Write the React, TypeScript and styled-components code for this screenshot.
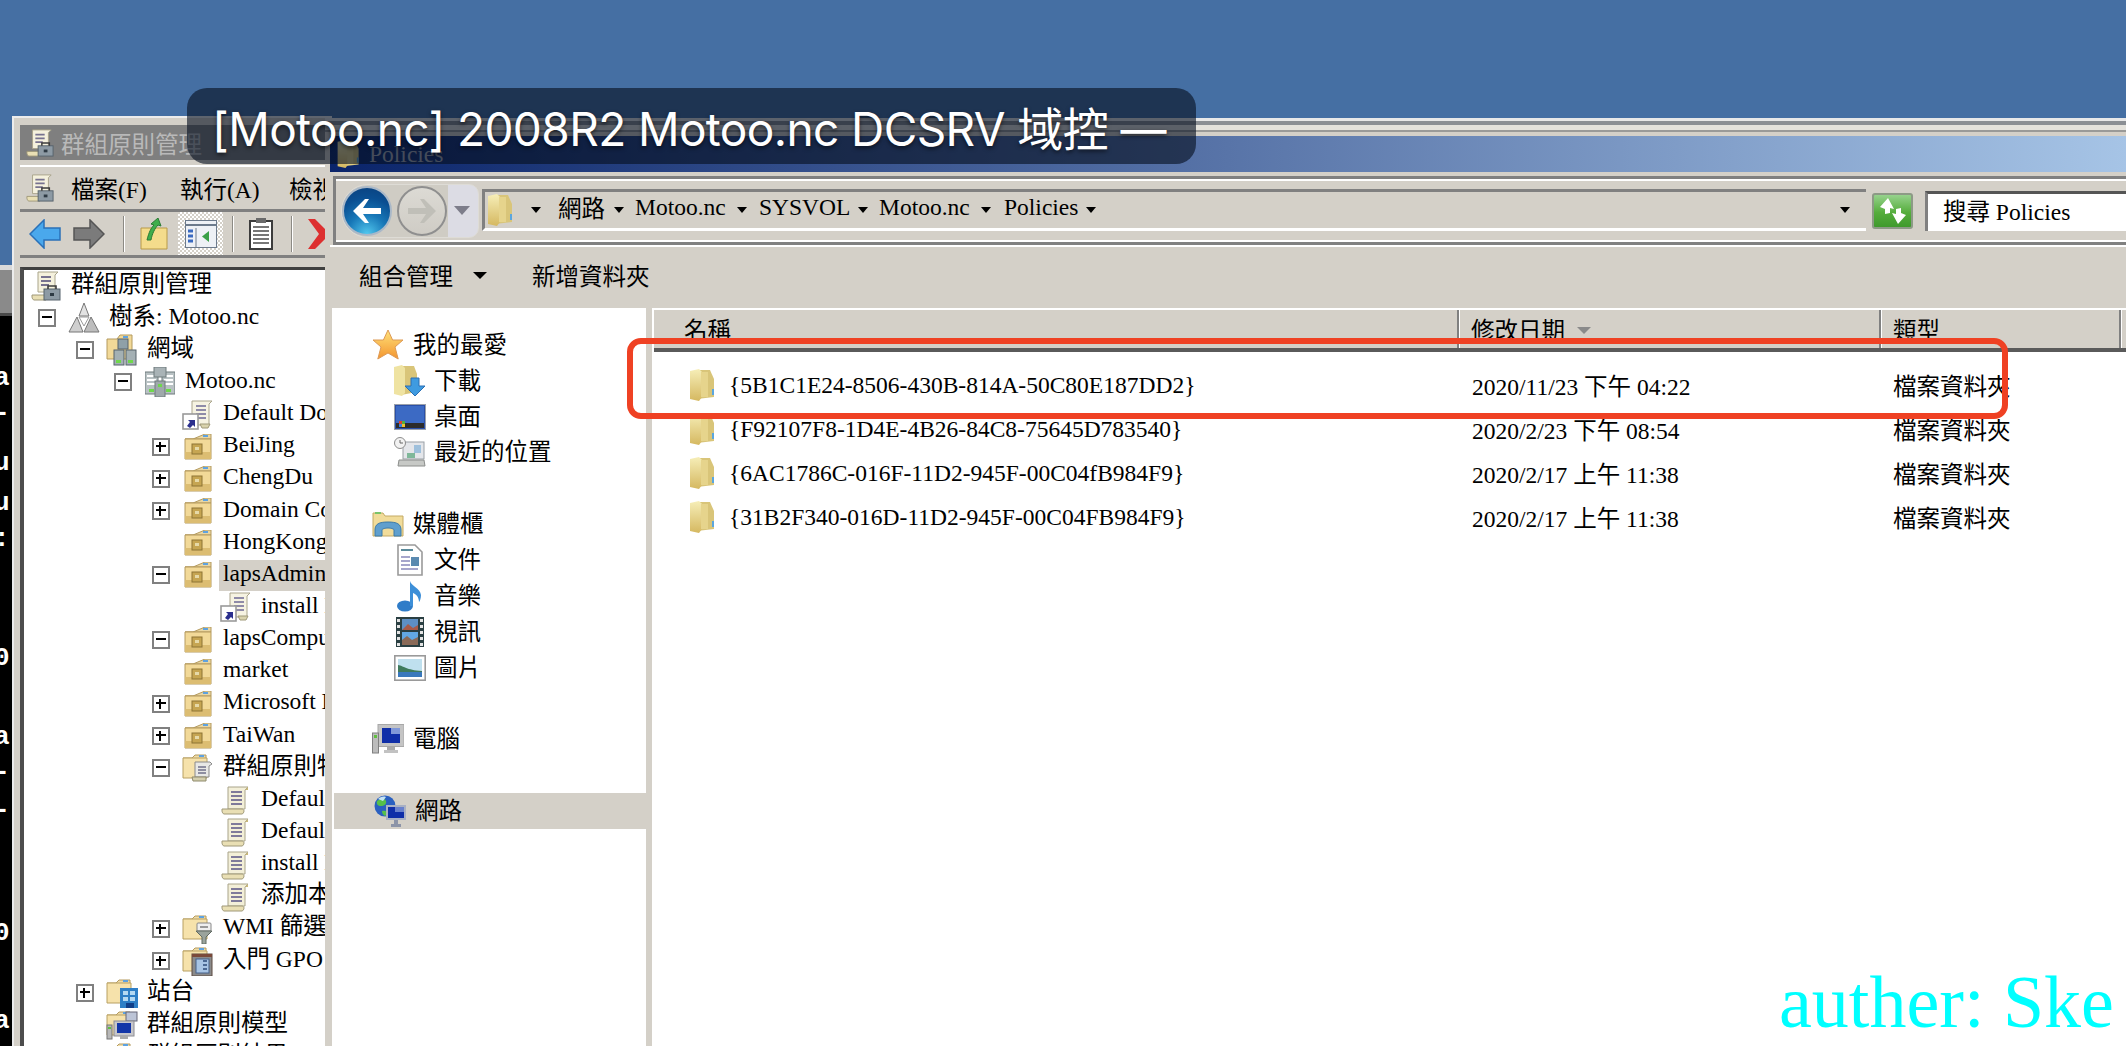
import * as React from "react";
import styled, { createGlobalStyle } from "styled-components";

const UI_FONT = `"Liberation Serif", "Noto Sans CJK TC", serif`;
const FACE = "#d4d0c8";

const GlobalStyle = createGlobalStyle`
  html, body { margin: 0; padding: 0; background: #456fa3; }
  * { box-sizing: border-box; }
`;

const Desktop = styled.div`
  position: relative;
  width: 2126px;
  height: 1046px;
  overflow: hidden;
  background: #456fa3;
  font-family: ${UI_FONT};
  font-size: 23.5px;
  color: #000;
`;

/* ---------- console window showing behind, only a sliver is visible ---------- */
const Terminal = styled.div`
  position: absolute;
  left: 0;
  top: 265px;
  width: 13px;
  bottom: 0;
  overflow: hidden;
  background: #000;
  border-top: 5px solid #d9d9d9;
  &::before {
    content: "";
    display: block;
    height: 43px;
    background: #8a8a8a;
    border-bottom: 3px solid #4a4a4a;
  }
`;

const TermGlyph = styled.span<{ $top: number }>`
  position: absolute;
  left: -6px;
  top: ${(p) => p.$top}px;
  font-family: "Liberation Mono", monospace;
  font-weight: 700;
  font-size: 26px;
  line-height: 26px;
  color: #fff;
`;

/* ---------- group policy console (left window) ---------- */
const MmcWindow = styled.div`
  position: absolute;
  left: 12px;
  top: 116px;
  width: 320px;
  bottom: 0;
  background: ${FACE};
  border-top: 2px solid #ececec;
  border-left: 2px solid #ececec;
  padding: 7px 0 0 6px;
  display: flex;
  flex-direction: column;
`;

const MmcTitle = styled.div`
  height: 35px;
  flex: none;
  display: flex;
  align-items: center;
  gap: 6px;
  padding-left: 5px;
  background: #7f7f7f;
  color: #b9b9b9;
  white-space: nowrap;
  overflow: hidden;
`;

const MmcMenu = styled.div`
  height: 47px;
  margin-top: 5px;
  flex: none;
  display: flex;
  align-items: center;
  padding-left: 5px;
  border-top: 2px solid #fff;
  border-bottom: 3px solid #808080;
  white-space: nowrap;
  overflow: hidden;
`;

const MenuLabel = styled.span`
  margin-left: 16px;
  width: 93px;
  flex: none;
  & + & { margin-left: 16px; }
`;

const MmcToolbar = styled.div`
  height: 46px;
  flex: none;
  display: flex;
  align-items: center;
  padding-left: 9px;
  border-bottom: 3px solid #808080;
  overflow: hidden;
`;

const ToolGap = styled.span`
  width: 12px;
  flex: none;
`;

const ToolSep = styled.span`
  width: 2px;
  height: 36px;
  margin: 0 15px 0 18px;
  background: #8c8a84;
  border-right: 1px solid #fff;
  flex: none;
`;

const ToolToggle = styled.span`
  width: 45px;
  height: 44px;
  margin: 0 -9px 0 10px;
  flex: none;
  display: flex;
  align-items: center;
  justify-content: center;
  background: repeating-conic-gradient(#fff 0 25%, ${FACE} 0 50%) 0 0 / 4px 4px;
`;

const TreePane = styled.div`
  margin-top: 9px;
  flex: 1;
  margin-right: 6px;
  background: #fff;
  border-top: 3px solid #404040;
  border-left: 4px solid #4d4d4d;
  padding-top: 0;
  overflow: hidden;
`;

const TreeRow = styled.div<{ $level: number }>`
  height: 32.15px;
  display: flex;
  align-items: center;
  margin-left: ${(p) => p.$level * 38 - 24}px;
  white-space: nowrap;
`;

const Expander = styled.span<{ $kind?: "+" | "-" }>`
  width: 18px;
  height: 18px;
  flex: none;
  position: relative;
  margin-right: 12px;
  visibility: ${(p) => (p.$kind ? "visible" : "hidden")};
  border: 2px solid #808080;
  &::before {
    content: "";
    position: absolute;
    left: 2px;
    right: 2px;
    top: 5px;
    height: 2px;
    background: #000;
  }
  &::after {
    content: "";
    display: ${(p) => (p.$kind === "+" ? "block" : "none")};
    position: absolute;
    top: 2px;
    bottom: 2px;
    left: 5px;
    width: 2px;
    background: #000;
  }
`;

const TreeIcon = styled.span`
  width: 32px;
  height: 30px;
  flex: none;
  display: flex;
  align-items: center;
  justify-content: center;
`;

const TreeLabel = styled.span<{ $selected?: boolean }>`
  margin-left: ${(p) => (p.$selected ? "5px" : "9px")};
  padding: ${(p) => (p.$selected ? "0 60px 4px 4px" : "0 0 4px")};
  height: 31px;
  line-height: 27px;
  background: ${(p) => (p.$selected ? FACE : "transparent")};
`;

/* ---------- explorer window (right) ---------- */
const ExplorerWindow = styled.div`
  position: absolute;
  left: 325px;
  top: 118px;
  right: 0;
  bottom: 0;
  display: flex;
  flex-direction: column;
  background: ${FACE};
  border-left: 5px solid ${FACE};
`;

const FrameTop = styled.div`
  height: 18px;
  flex: none;
  margin-left: -5px;
  background: linear-gradient(
    to bottom,
    #e8e8e8 0 3px,
    #8b8f94 3px 7px,
    #e4e2dc 7px 12px,
    #9a9a98 12px 14px,
    ${FACE} 14px 18px
  );
`;

const ExplorerTitle = styled.div`
  height: 36px;
  flex: none;
  display: flex;
  align-items: center;
  gap: 8px;
  padding-left: 7px;
  color: #a8acb8;
  background: linear-gradient(to right, #0a246a, #a6c4e6);
`;

const NavBar = styled.div`
  height: 69px;
  flex: none;
  margin-top: 4px;
  margin-left: 3px;
  display: flex;
  align-items: center;
  padding: 0 0 0 5px;
  border: 3px solid #808080;
  border-right: 0;
  box-shadow: 0 -2px 0 #fff inset, 0 2px 0 #fff inset;
`;

const NavCluster = styled.div`
  display: flex;
  align-items: center;
  width: 138px;
  height: 54px;
  flex: none;
  border-radius: 27px 10px 10px 27px;
  background: linear-gradient(to right, #cfccc4 0 78%, #dcdce4 78%);
  border: 1px solid #dedcd6;
`;

const RoundButton = styled.span<{ $active?: boolean }>`
  width: 50px;
  height: 50px;
  flex: none;
  border-radius: 50%;
  display: flex;
  align-items: center;
  justify-content: center;
  margin-right: 5px;
  border: 2px solid ${(p) => (p.$active ? "#a9b8c8" : "#8f8f8f")};
  background: ${(p) =>
    p.$active
      ? "radial-gradient(circle at 50% 100%, #52c8ee 0, #1878b8 38%, #0a4f92 70%, #0a3f7c 100%)"
      : "linear-gradient(to bottom, #dcdad4, #cfccc5)"};
`;

const AddressBox = styled.div`
  flex: 1;
  min-width: 0;
  height: 42px;
  margin-left: 3px;
  margin-top: -2px;
  display: flex;
  align-items: center;
  padding-left: 3px;
  white-space: nowrap;
  border-top: 3px solid #808080;
  border-left: 3px solid #808080;
  border-bottom: 3px solid #fff;
`;

const Crumb = styled.span<{ $w: number; $pl: number }>`
  width: ${(p) => p.$w}px;
  padding: 0 0 5px ${(p) => p.$pl}px;
  flex: none;
`;

const CrumbArrow = styled.span<{ $ml?: number }>`
  width: 0;
  height: 0;
  flex: none;
  margin-left: ${(p) => p.$ml ?? 0}px;
  border-left: 5px solid transparent;
  border-right: 5px solid transparent;
  border-top: 6px solid #000;
`;

const RefreshButton = styled.span`
  width: 41px;
  height: 36px;
  flex: none;
  margin-left: 6px;
  display: flex;
  align-items: center;
  justify-content: center;
  border: 2px solid #8d9a86;
  border-radius: 3px;
  background: linear-gradient(to bottom, #96d28c, #55ad3c 55%, #3f9a2c);
`;

const SearchBox = styled.div`
  width: 201px;
  height: 40px;
  flex: none;
  margin-left: 12px;
  padding: 0 0 5px 15px;
  background: #fff;
  display: flex;
  align-items: center;
  border-top: 3px solid #555;
  border-left: 3px solid #808080;
  white-space: nowrap;
`;

const CommandBar = styled.div`
  height: 63px;
  flex: none;
  display: flex;
  align-items: center;
  padding: 0 0 6px 29px;
  border-top: 2px solid #fff;
`;

const CommandArrow = styled.span`
  width: 0;
  height: 0;
  margin: 2px 45px 0 20px;
  border-left: 7px solid transparent;
  border-right: 7px solid transparent;
  border-top: 7px solid #000;
`;

const Panes = styled.div`
  flex: 1;
  display: flex;
  min-height: 0;
  gap: 6px;
  padding-left: 2px;
`;

const NavPane = styled.div`
  width: 314px;
  flex: none;
  background: #fff;
  padding-top: 19px;
`;

const NavRow = styled.div<{ $level: number; $selected?: boolean }>`
  height: 35.85px;
  display: flex;
  align-items: center;
  padding-left: ${(p) => (p.$level ? 62 : 40)}px;
  background: ${(p) => (p.$selected ? FACE : "transparent")};
  margin-left: ${(p) => (p.$selected ? "2px" : "0")};
`;

const NavLabel = styled.span<{ $level: number }>`
  margin-left: ${(p) => (p.$level ? 8 : 9)}px;
  padding-bottom: 4px;
`;

const NavIcon = styled.span`
  width: 32px;
  height: 34px;
  flex: none;
  display: flex;
  align-items: center;
  justify-content: center;
`;

const ListPane = styled.div`
  flex: 1;
  background: #fff;
  min-width: 0;
`;

const ListHeader = styled.div`
  height: 44px;
  display: flex;
  margin-left: 2px;
  background: ${FACE};
  border-top: 2px solid #fff;
  border-bottom: 4px solid #5a5a5a;
`;

const HeaderCell = styled.div<{ $w: number }>`
  width: ${(p) => p.$w}px;
  flex: none;
  display: flex;
  align-items: center;
  padding-left: ${(p) => (p.$w > 700 ? 30 : 12)}px;
  border-right: 2px solid #808080;
  box-shadow: 1px 0 0 #fff;
  white-space: nowrap;
`;

const SortArrow = styled.span`
  width: 0;
  height: 0;
  margin: 2px 0 0 12px;
  border-left: 7px solid transparent;
  border-right: 7px solid transparent;
  border-top: 7px solid #8a8a8a;
`;

const FileList = styled.div`
  padding-top: 11px;
`;

const FileRow = styled.div`
  height: 44px;
  display: grid;
  grid-template-columns: 820px 421px auto;
  align-items: center;
  white-space: nowrap;
`;

const NameCell = styled.div`
  display: flex;
  align-items: center;
  gap: 13px;
  padding-left: 38px;
`;

/* ---------- things lying over the windows ---------- */
const Hud = styled.div`
  position: absolute;
  left: 187px;
  top: 88px;
  width: 1009px;
  height: 76px;
  border-radius: 20px;
  background: rgba(6, 16, 32, 0.62);
  color: #fff;
  padding-left: 25px;
  display: flex;
  align-items: center;
  font-family: Inter, "Noto Sans CJK TC", sans-serif;
  font-size: 46px;
  letter-spacing: -0.6px;
  white-space: nowrap;
  text-shadow: 0 2px 4px rgba(0, 0, 0, 0.6);
`;

const Callout = styled.div`
  position: absolute;
  left: 627px;
  top: 338px;
  width: 1381px;
  height: 81px;
  border: 6px solid #ef4123;
  border-radius: 14px;
`;

const Watermark = styled.div`
  position: absolute;
  left: 1779px;
  top: 960px;
  font-family: "Liberation Serif", serif;
  font-size: 74px;
  line-height: 85px;
  color: #00ffff;
  white-space: nowrap;
`;

/* ---------- icons ---------- */
const Svg = styled.svg`
  display: block;
  flex: none;
`;

type IconProps = { w?: number; h?: number };

const Scroll = ({ w = 30, h = 30 }: IconProps) => (
  <Svg width={w} height={h} viewBox="0 0 30 30">
    <path d="M7 2h20l-3 3v19H7z" fill="#f3efd8" stroke="#a9a48a" />
    <path d="M24 5l3-3v3z" fill="#c9b87a" />
    <path d="M10 7h11M10 11h11M10 15h11M10 19h11" stroke="#7f7a9a" strokeWidth="2" />
    <path d="M1 24h20c1 0 2 1 2 2s-1 3-2 3H3c-1 0-2-2-2-3z" fill="#e9dfb4" stroke="#9f9878" />
  </Svg>
);

const ScrollTool = ({ w = 30, h = 30 }: IconProps) => (
  <Svg width={w} height={h} viewBox="0 0 30 30">
    <path d="M7 1h20l-3 3v17H7z" fill="#f5f1dd" stroke="#a9a48a" />
    <path d="M10 6h10M10 10h10M10 14h8" stroke="#77728f" strokeWidth="2" />
    <path d="M1 24h14v5H3c-1 0-2-2-2-3z" fill="#e9dfb4" stroke="#9f9878" />
    <rect x="13" y="18" width="16" height="11" fill="#8d9aa4" stroke="#56626c" />
    <path d="M17 18v-3h8v3" fill="none" stroke="#3c3c3c" strokeWidth="1.6" />
    <rect x="19" y="22" width="4" height="3" fill="#2e3a44" />
  </Svg>
);

const ShortcutScroll = () => (
  <Svg width={32} height={30} viewBox="0 0 32 30">
    <path d="M10 1h20l-3 3v21H10z" fill="#f6f3e2" stroke="#aaa58c" />
    <path d="M14 6h10M14 10h10M14 14h10M14 18h10" stroke="#8f8ba8" strokeWidth="2" />
    <path d="M18 24h10l-2 4H20z" fill="#d9d3ad" stroke="#a09a7a" />
    <rect x="1" y="14" width="15" height="15" fill="#fff" stroke="#9a9a9a" strokeWidth="1.6" />
    <rect x="4" y="17" width="9" height="9" fill="#fff" />
    <path d="M5 26l3-4-2-2h7v7l-2-2-3 3z" fill="#2b2f8e" />
  </Svg>
);

const OuFolder = () => (
  <Svg width={28} height={26} viewBox="0 0 28 26">
    <path d="M1 5h8l12-5h6v5z" fill="#e9d6a2" stroke="#b49a5e" />
    <rect x="19" y="1" width="5" height="2" fill="#5ea2e0" />
    <path d="M1 5h26v20H1z" fill="#f2d998" stroke="#b49a5e" />
    <path d="M1 18h26v7H1z" fill="#dcbd72" />
    <rect x="8" y="10" width="10" height="10" fill="#c6a552" stroke="#8d7434" />
    <rect x="11" y="13" width="4" height="3" fill="#e6d9a8" />
  </Svg>
);

const ContainerFolder = ({ badge }: { badge: "gpo" | "wmi" | "starter" | "site" | "model" | "result" }) => (
  <Svg width={32} height={30} viewBox="0 0 32 30">
    <path d="M1 5h9l3-3h11v3" fill="#efdca8" stroke="#b49a5e" />
    <rect x="17" y="2" width="5" height="2" fill="#5ea2e0" />
    <path d="M1 5h24v20H1z" fill="#f6e2ab" stroke="#b8a062" />
    {badge === "gpo" && (
      <g>
        <path d="M13 9h15l2 2-3 2v11H13z" fill="#e8e8e6" stroke="#8a8a8a" />
        <path d="M16 14h8M16 17h8M16 20h8" stroke="#70708a" strokeWidth="1.6" />
        <path d="M10 24h14v4H11z" fill="#d4cfae" stroke="#8f8a6c" />
      </g>
    )}
    {badge === "wmi" && (
      <g>
        <rect x="15" y="9" width="14" height="8" rx="1" fill="#efefef" stroke="#888" />
        <rect x="18" y="12" width="8" height="2" fill="#999" />
        <path d="M14 17h16l-6 6v7h-4v-7z" fill="#9aa39c" stroke="#606a62" />
      </g>
    )}
    {badge === "starter" && (
      <g>
        <rect x="10" y="8" width="20" height="22" fill="#8a8a8a" stroke="#5d4a40" />
        <rect x="10" y="8" width="20" height="3" fill="#7a4a3a" />
        <rect x="14" y="13" width="13" height="14" fill="#a8c4e4" stroke="#44608a" />
        <path d="M21 15h4M21 19h4M21 23h4" stroke="#2c4a78" strokeWidth="1.6" />
      </g>
    )}
    {badge === "site" && (
      <g>
        <rect x="14" y="10" width="18" height="20" fill="#2f7fc6" />
        <path d="M17 13h5v4h-5zM24 13h5v4h-5zM17 19h5v4h-5zM24 19h5v4h-5z" fill="#b5d9f2" />
        <rect x="20" y="25" width="8" height="5" fill="#123f88" />
      </g>
    )}
    {badge === "model" && (
      <g>
        <rect x="20" y="2" width="11" height="9" fill="#bcc4d6" stroke="#667" />
        <rect x="8" y="11" width="20" height="15" fill="#c7c7cb" stroke="#8c8c92" />
        <rect x="11" y="13" width="14" height="10" fill="#1336a8" />
        <rect x="14" y="26" width="8" height="3" fill="#aaa" />
        <rect x="1" y="15" width="5" height="14" fill="#b8b8b8" stroke="#777" />
        <rect x="2" y="17" width="3" height="2" fill="#60c040" />
      </g>
    )}
    {badge === "result" && (
      <g>
        <rect x="12" y="9" width="18" height="18" fill="#e6e6e6" stroke="#888" />
      </g>
    )}
  </Svg>
);

const DomainTree = () => (
  <Svg width={32} height={32} viewBox="0 0 32 32">
    <path d="M16 1l5 13H11z" fill="#e2e2e2" stroke="#777" />
    <path d="M9 15l6 15H1z" fill="#cfcfcf" stroke="#777" />
    <path d="M23 15l8 15H16z" fill="#bdbdbd" stroke="#777" />
    <path d="M11 15h10l-5 9z" fill="#fff" stroke="#999" />
  </Svg>
);

const Rack = ({ x }: { x: number }) => (
  <g>
    <rect x={x} y="5" width="13" height="22" fill="#b9c2c4" stroke="#6f7a7c" />
    <path d={`M${x + 2} 9h9M${x + 2} 13h9M${x + 2} 17h9`} stroke="#fff" strokeWidth="2" />
    <rect x={x + 4} y="22" width="5" height="3" fill="#6fd84c" />
  </g>
);

const Servers = () => (
  <Svg width={30} height={30} viewBox="0 0 30 30">
    <Rack x={0} />
    <Rack x={17} />
    <rect x="9" y="0" width="12" height="10" fill="#a9b3b6" stroke="#6f7a7c" />
    <rect x="10" y="14" width="10" height="16" fill="#9fa9ab" stroke="#6f7a7c" />
    <rect x="13" y="17" width="4" height="3" fill="#6fd84c" />
  </Svg>
);

const DomainFolder = () => (
  <Svg width={32} height={32} viewBox="0 0 32 32">
    <path d="M1 5h10l3-4h12v24H1z" fill="#f2d998" stroke="#b49a5e" />
    <rect x="17" y="2" width="5" height="2" fill="#5ea2e0" />
    <rect x="12" y="5" width="10" height="10" fill="#8fa0a8" stroke="#57636a" />
    <rect x="8" y="16" width="10" height="15" fill="#a4b0b4" stroke="#57636a" />
    <rect x="20" y="16" width="10" height="15" fill="#a4b0b4" stroke="#57636a" />
    <rect x="10" y="26" width="5" height="3" fill="#6fd84c" />
    <rect x="22" y="26" width="5" height="3" fill="#6fd84c" />
  </Svg>
);

const TallFolder = ({ w = 26, h = 32 }: IconProps) => (
  <Svg width={w} height={h} viewBox="0 0 26 32">
    <defs>
      <linearGradient id="tall" x1="0" x2="0" y1="0" y2="1">
        <stop offset="0" stopColor="#f6eeb8" />
        <stop offset="1" stopColor="#d5b860" />
      </linearGradient>
    </defs>
    <path d="M7 1h13l4 9v18l-17 2z" fill="#d9c579" />
    <path d="M0 2l9-2 3 3v25l-3 4-9-2z" fill="url(#tall)" />
    <path d="M11 3h7v25h-7z" fill="#e6d48c" />
    <rect x="22" y="20" width="2" height="6" fill="#5aa6de" />
  </Svg>
);

const Star = () => (
  <Svg width={32} height={31} viewBox="0 0 32 31">
    <defs>
      <linearGradient id="star" x1="0" x2="0" y1="0" y2="1">
        <stop offset="0" stopColor="#ffe27a" />
        <stop offset="1" stopColor="#f3952f" />
      </linearGradient>
    </defs>
    <path d="M16 1l4.6 10H31l-8 7 3.2 12L16 24 5.8 30 9 18l-8-7h10.400z" fill="url(#star)" stroke="#dd9a55" />
  </Svg>
);

const Downloads = () => (
  <Svg width={32} height={32} viewBox="0 0 32 32">
    <path d="M7 1h13l3 8v18l-16 3z" fill="#d9c579" />
    <path d="M0 2l8-2 3 3v25l-3 3-8-2z" fill="#efe3a2" />
    <path d="M17 13h8v8h6l-10 10-10-10h6z" fill="#3f9be0" stroke="#2a6fb4" />
  </Svg>
);

const DesktopIcon = () => (
  <Svg width={32} height={26} viewBox="0 0 32 26">
    <rect x="0.500" y="0.500" width="31" height="25" fill="#2a4fa8" stroke="#9aa0aa" />
    <rect x="2" y="2" width="28" height="17" fill="#3c6ac4" />
    <rect x="2" y="19" width="28" height="5" fill="#2c2c2c" />
    <rect x="5" y="17" width="3" height="3" fill="#e04030" />
    <rect x="8" y="17" width="3" height="3" fill="#50b040" />
    <rect x="5" y="20" width="3" height="3" fill="#3a80e0" />
    <rect x="8" y="20" width="3" height="3" fill="#f0c030" />
  </Svg>
);

const Recent = () => (
  <Svg width={32} height={30} viewBox="0 0 32 30">
    <rect x="9" y="5" width="21" height="17" fill="#e4e6ea" stroke="#9aa0a6" />
    <rect x="20" y="8" width="7" height="8" fill="#9ec0dc" />
    <rect x="13" y="16" width="8" height="5" fill="#7fb89a" />
    <path d="M5 23h25l1 6H4z" fill="#c7c9c6" stroke="#8c8e8c" />
    <circle cx="6" cy="6" r="5.500" fill="#f2f2f2" stroke="#8c8c8c" />
    <path d="M6 3v3h3" fill="none" stroke="#666" />
  </Svg>
);

const Library = () => (
  <Svg width={32} height={28} viewBox="0 0 32 28">
    <path d="M1 3h10l2 3h18v20H1z" fill="#f1dc9a" stroke="#c4aa64" />
    <rect x="3" y="2" width="6" height="2" fill="#7ac46a" />
    <path d="M3 26v-6c0-6 4-8 13-8s13 2 13 8v6h-7v-6c0-1-3-2-6-2s-6 1-6 2v6z" fill="#5f9fce" stroke="#3c7aa8" />
  </Svg>
);

const DocIcon = () => (
  <Svg width={26} height={32} viewBox="0 0 26 32">
    <path d="M1 1h17l7 7v23H1z" fill="#fff" stroke="#9a9a9a" strokeWidth="1.600" />
    <path d="M4 6h12" stroke="#5a8a9a" strokeWidth="2" />
    <path d="M4 13h9M4 17h9M4 21h9M4 25h17" stroke="#a6a6cc" strokeWidth="2" />
    <rect x="14" y="13" width="8" height="9" fill="#5a8ab0" />
  </Svg>
);

const MusicIcon = () => (
  <Svg width={26} height={32} viewBox="0 0 26 32">
    <ellipse cx="8" cy="26" rx="8" ry="5.500" fill="#2f7cc8" />
    <path d="M13 26V1c1 5 10 7 11 14 0 3-1 6-2 7 0-5-3-8-6-9v13z" fill="#3d8fd8" />
  </Svg>
);

const VideoIcon = () => (
  <Svg width={28} height={30} viewBox="0 0 28 30">
    <rect width="28" height="30" fill="#2a3f42" />
    <path d="M1 2h3v3H1zM1 8h3v3H1zM1 14h3v3H1zM1 20h3v3H1zM1 26h3v3H1zM24 2h3v3h-3zM24 8h3v3h-3zM24 14h3v3h-3zM24 20h3v3h-3zM24 26h3v3h-3z" fill="#e4e4e4" />
    <rect x="6" y="2" width="16" height="11" fill="#5d8fc4" />
    <path d="M6 13l6-6 5 4 5-3v5z" fill="#a85a48" />
    <rect x="6" y="15" width="16" height="13" fill="#62a8e4" />
    <path d="M6 28v-5l5-4 5 4 6-3v8z" fill="#8a6a58" />
  </Svg>
);

const PictureIcon = () => (
  <Svg width={32} height={26} viewBox="0 0 32 26">
    <rect x="0.800" y="0.800" width="30.400" height="24.400" fill="#fff" stroke="#9a9a9a" strokeWidth="1.600" />
    <rect x="4" y="4" width="24" height="18" fill="#bfe0ee" />
    <path d="M4 10c6 1 8 5 24 6v2H4z" fill="#3f7a5c" />
    <rect x="4" y="17" width="24" height="5" fill="#3a78bc" />
  </Svg>
);

const ComputerIcon = () => (
  <Svg width={32} height={30} viewBox="0 0 32 30">
    <rect x="6" y="0.500" width="26" height="22" fill="#c4c4c4" stroke="#a8a8a8" />
    <rect x="10" y="4" width="18" height="15" fill="#0f2ea8" />
    <rect x="19" y="4" width="9" height="6" fill="#8098d8" />
    <rect x="15" y="23" width="8" height="3" fill="#aaa" />
    <rect x="12" y="26" width="14" height="3" fill="#c2c2c2" />
    <rect x="0.500" y="9" width="6" height="20" fill="#bcbcbc" stroke="#808080" />
    <rect x="2" y="11" width="3" height="3" fill="#60c040" />
  </Svg>
);

const NetworkIcon = () => (
  <Svg width={32} height={32} viewBox="0 0 32 32">
    <circle cx="11" cy="11" r="10.500" fill="#2a60c0" />
    <path d="M3 6c4-3 8-3 9 0s-2 5-5 5-5-2-4-5zM8 16c3-1 6 0 6 3l-3 2c-2-1-3-3-3-5z" fill="#56c04a" />
    <path d="M4 4c2-2 5-3 8-2l-3 4z" fill="#c6e4f4" />
    <rect x="12" y="10" width="20" height="15" fill="#a8b0c4" />
    <rect x="14" y="12" width="16" height="11" fill="#0f2ea8" />
    <rect x="21" y="12" width="9" height="5" fill="#6880cc" />
    <rect x="20" y="25" width="4" height="4" fill="#8c94a8" />
    <rect x="17" y="29" width="10" height="3" fill="#8c94a8" />
  </Svg>
);

const ToolArrow = ({ dir, color, edge }: { dir: "left" | "right"; color: string; edge: string }) => (
  <Svg width={32} height={30} viewBox="0 0 32 30">
    <path
      d={dir === "left" ? "M1 15L15 1v8h16v12H15v8z" : "M31 15L17 1v8H1v12h16v8z"}
      fill={color}
      stroke={edge}
      strokeWidth="1.500"
    />
  </Svg>
);

const UpFolder = () => (
  <Svg width={28} height={32} viewBox="0 0 28 32">
    <path d="M1 10h26v21H1z" fill="#f4dc8c" stroke="#b89a48" />
    <path d="M7 22C9 14 11 10 14 7l-3-1 7-6 3 8-3-1c-3 3-6 9-7 15z" fill="#3fae4c" stroke="#2a7a34" />
  </Svg>
);

const TreeToggleIcon = () => (
  <Svg width={32} height={28} viewBox="0 0 32 28">
    <rect x="0.500" y="0.500" width="31" height="27" fill="#eef1f6" stroke="#6c7a8c" />
    <path d="M1 5h30" stroke="#6c7a8c" strokeWidth="2" />
    <path d="M3 11h5M3 16h5M3 21h5" stroke="#3a6ac0" strokeWidth="3" />
    <path d="M11 8v19" stroke="#6c7a8c" />
    <path d="M24 11v11l-7-5.500z" fill="#3aa048" />
  </Svg>
);

const Clipboard = () => (
  <Svg width={24} height={32} viewBox="0 0 24 32">
    <rect x="1" y="3" width="22" height="28" fill="#fff" stroke="#3c3c3c" strokeWidth="2" />
    <rect x="7" y="0" width="10" height="5" fill="#6a6a6a" />
    <path d="M4 9h16M4 13h16M4 17h16M4 21h16M4 25h16" stroke="#777" strokeWidth="2" />
  </Svg>
);

const RedX = () => (
  <Svg width={18} height={34} viewBox="0 0 18 34">
    <path d="M0 2h7l11 11v8L7 32H0l11-15z" fill="#dd3030" />
  </Svg>
);

const BackArrow = ({ color }: { color: string }) => (
  <Svg width={30} height={26} viewBox="0 0 30 26">
    <path d="M1 13L13 1h4l-6 9h18v6H11l6 9h-4z" fill={color} />
  </Svg>
);

const ForwardArrow = ({ color }: { color: string }) => (
  <Svg width={30} height={26} viewBox="0 0 30 26">
    <path d="M29 13L17 1h-4l6 9H1v6h18l-6 9h4z" fill={color} />
  </Svg>
);

const RefreshIcon = () => (
  <Svg width={30} height={30} viewBox="0 0 30 30">
    <path d="M10 2L2 11l5 2v5l5-1v-5l4 1z" fill="#fff" />
    <path d="M20 28l8-9-5-2v-5l-5 1v5l-4-1z" fill="#fff" />
  </Svg>
);

const SmallDrop = styled.span`
  width: 0;
  height: 0;
  margin-left: 2px;
  border-left: 8px solid transparent;
  border-right: 8px solid transparent;
  border-top: 9px solid #7d7d8a;
  flex: none;
`;

/* ---------- data ---------- */
type TreeItem = {
  level: number;
  kind?: "+" | "-";
  icon: React.ReactNode;
  label: string;
  selected?: boolean;
};

const treeItems: TreeItem[] = [
  { level: 0, icon: <ScrollTool />, label: "群組原則管理" },
  { level: 1, kind: "-", icon: <DomainTree />, label: "樹系: Motoo.nc" },
  { level: 2, kind: "-", icon: <DomainFolder />, label: "網域" },
  { level: 3, kind: "-", icon: <Servers />, label: "Motoo.nc" },
  { level: 4, icon: <ShortcutScroll />, label: "Default Domain Policy" },
  { level: 4, kind: "+", icon: <OuFolder />, label: "BeiJing" },
  { level: 4, kind: "+", icon: <OuFolder />, label: "ChengDu" },
  { level: 4, kind: "+", icon: <OuFolder />, label: "Domain Controllers" },
  { level: 4, icon: <OuFolder />, label: "HongKong" },
  { level: 4, kind: "-", icon: <OuFolder />, label: "lapsAdmin", selected: true },
  { level: 5, icon: <ShortcutScroll />, label: "install LAPS" },
  { level: 4, kind: "-", icon: <OuFolder />, label: "lapsComputers" },
  { level: 4, icon: <OuFolder />, label: "market" },
  { level: 4, kind: "+", icon: <OuFolder />, label: "Microsoft Exchange" },
  { level: 4, kind: "+", icon: <OuFolder />, label: "TaiWan" },
  { level: 4, kind: "-", icon: <ContainerFolder badge="gpo" />, label: "群組原則物件" },
  { level: 5, icon: <Scroll />, label: "Default Domain" },
  { level: 5, icon: <Scroll />, label: "Default Domain" },
  { level: 5, icon: <Scroll />, label: "install LAPS" },
  { level: 5, icon: <Scroll />, label: "添加本機管理員" },
  { level: 4, kind: "+", icon: <ContainerFolder badge="wmi" />, label: "WMI 篩選器" },
  { level: 4, kind: "+", icon: <ContainerFolder badge="starter" />, label: "入門 GPO" },
  { level: 2, kind: "+", icon: <ContainerFolder badge="site" />, label: "站台" },
  { level: 2, icon: <ContainerFolder badge="model" />, label: "群組原則模型" },
  { level: 2, icon: <ContainerFolder badge="result" />, label: "群組原則結果" },
];

type NavItem = { level: number; icon?: React.ReactNode; label?: string; selected?: boolean };

const navItems: NavItem[] = [
  { level: 0, icon: <Star />, label: "我的最愛" },
  { level: 1, icon: <Downloads />, label: "下載" },
  { level: 1, icon: <DesktopIcon />, label: "桌面" },
  { level: 1, icon: <Recent />, label: "最近的位置" },
  { level: 0 },
  { level: 0, icon: <Library />, label: "媒體櫃" },
  { level: 1, icon: <DocIcon />, label: "文件" },
  { level: 1, icon: <MusicIcon />, label: "音樂" },
  { level: 1, icon: <VideoIcon />, label: "視訊" },
  { level: 1, icon: <PictureIcon />, label: "圖片" },
  { level: 0 },
  { level: 0, icon: <ComputerIcon />, label: "電腦" },
  { level: 0 },
  { level: 0, icon: <NetworkIcon />, label: "網路", selected: true },
];

const files = [
  { name: "{5B1C1E24-8506-430B-814A-50C80E187DD2}", date: "2020/11/23 下午 04:22" },
  { name: "{F92107F8-1D4E-4B26-84C8-75645D783540}", date: "2020/2/23 下午 08:54" },
  { name: "{6AC1786C-016F-11D2-945F-00C04fB984F9}", date: "2020/2/17 上午 11:38" },
  { name: "{31B2F340-016D-11D2-945F-00C04FB984F9}", date: "2020/2/17 上午 11:38" },
];

const termGlyphs = [
  { top: 95, ch: "a" },
  { top: 130, ch: "-" },
  { top: 180, ch: "u" },
  { top: 220, ch: "u" },
  { top: 256, ch: ":" },
  { top: 375, ch: "0" },
  { top: 454, ch: "a" },
  { top: 489, ch: "-" },
  { top: 527, ch: "-" },
  { top: 650, ch: "0" },
  { top: 738, ch: "a" },
];

const App = () => {
  return (
    <Desktop>
      <GlobalStyle />

      <Terminal>
        {termGlyphs.map((g, i) => (
          <TermGlyph key={i} $top={g.top}>
            {g.ch}
          </TermGlyph>
        ))}
      </Terminal>

      <MmcWindow>
        <MmcTitle>
          <ScrollTool w={30} h={28} />
          群組原則管理
        </MmcTitle>
        <MmcMenu>
          <ScrollTool w={30} h={28} />
          <MenuLabel>檔案(F)</MenuLabel>
          <MenuLabel>執行(A)</MenuLabel>
          <MenuLabel>檢視(V)</MenuLabel>
        </MmcMenu>
        <MmcToolbar>
          <ToolArrow dir="left" color="#4aa8ec" edge="#2a70b8" />
          <ToolGap />
          <ToolArrow dir="right" color="#7b7b7b" edge="#555" />
          <ToolSep />
          <UpFolder />
          <ToolToggle>
            <TreeToggleIcon />
          </ToolToggle>
          <ToolSep />
          <Clipboard />
          <ToolSep />
          <RedX />
        </MmcToolbar>
        <TreePane>
          {treeItems.map((item, i) => (
            <TreeRow key={i} $level={item.level}>
              <Expander $kind={item.kind} />
              <TreeIcon>{item.icon}</TreeIcon>
              <TreeLabel $selected={item.selected}>{item.label}</TreeLabel>
            </TreeRow>
          ))}
        </TreePane>
      </MmcWindow>

      <ExplorerWindow>
        <FrameTop />
        <ExplorerTitle>
          <TallFolder w={24} h={28} />
          Policies
        </ExplorerTitle>
        <NavBar>
          <NavCluster>
            <RoundButton $active>
              <BackArrow color="#fff" />
            </RoundButton>
            <RoundButton>
              <ForwardArrow color="#c0bfb8" />
            </RoundButton>
            <SmallDrop />
          </NavCluster>
          <AddressBox>
            <TallFolder w={26} h={32} />
            <CrumbArrow $ml={17} />
            <Crumb $w={73} $pl={17}>網路</Crumb>
            <CrumbArrow />
            <Crumb $w={113} $pl={11}>Motoo.nc</Crumb>
            <CrumbArrow />
            <Crumb $w={111} $pl={12}>SYSVOL</Crumb>
            <CrumbArrow />
            <Crumb $w={113} $pl={11}>Motoo.nc</Crumb>
            <CrumbArrow />
            <Crumb $w={95} $pl={13}>Policies</Crumb>
            <CrumbArrow />
            <CrumbArrow $ml={744} />
          </AddressBox>
          <RefreshButton>
            <RefreshIcon />
          </RefreshButton>
          <SearchBox>搜尋 Policies</SearchBox>
        </NavBar>
        <CommandBar>
          組合管理
          <CommandArrow />
          新增資料夾
        </CommandBar>
        <Panes>
          <NavPane>
            {navItems.map((item, i) => (
              <NavRow key={i} $level={item.level} $selected={item.selected}>
                {item.icon && <NavIcon>{item.icon}</NavIcon>}
                {item.label && <NavLabel $level={item.level}>{item.label}</NavLabel>}
              </NavRow>
            ))}
          </NavPane>
          <ListPane>
            <ListHeader>
              <HeaderCell $w={805}>名稱</HeaderCell>
              <HeaderCell $w={422}>
                修改日期
                <SortArrow />
              </HeaderCell>
              <HeaderCell $w={240}>類型</HeaderCell>
            </ListHeader>
            <FileList>
              {files.map((f) => (
                <FileRow key={f.name}>
                  <NameCell>
                    <TallFolder />
                    <span>{f.name}</span>
                  </NameCell>
                  <span>{f.date}</span>
                  <span>檔案資料夾</span>
                </FileRow>
              ))}
            </FileList>
          </ListPane>
        </Panes>
      </ExplorerWindow>

      <Callout />
      <Hud>[Motoo.nc] 2008R2 Motoo.nc DCSRV 域控 —</Hud>
      <Watermark>auther: Ske</Watermark>
    </Desktop>
  );
};

export default App;
